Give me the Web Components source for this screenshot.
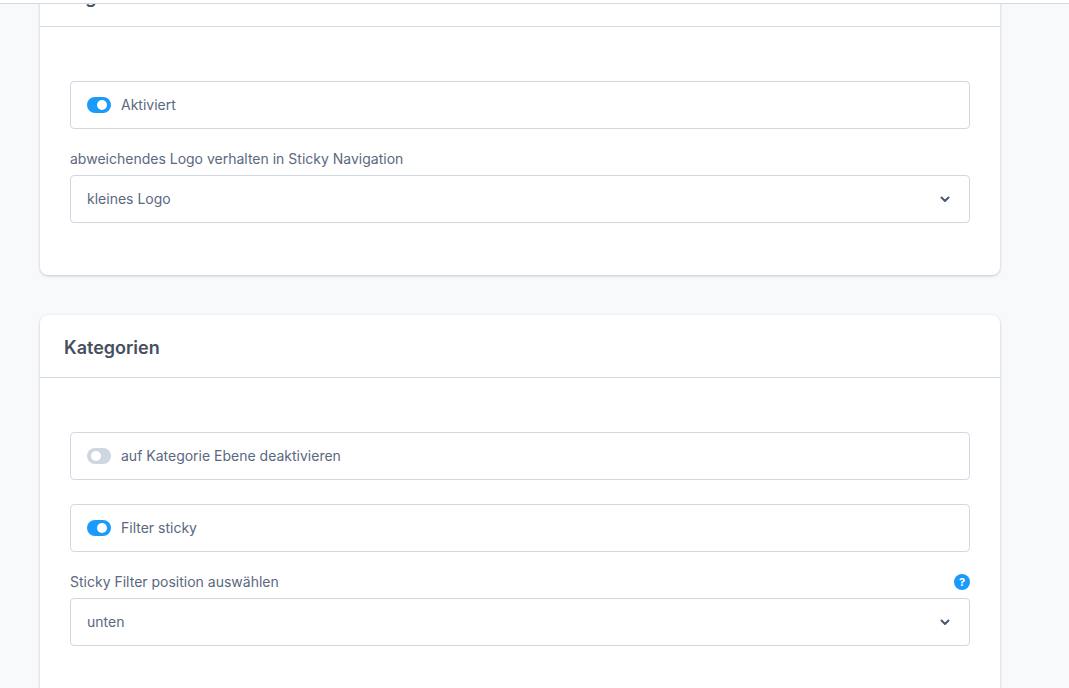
<!DOCTYPE html>
<html lang="de"><head><meta charset="utf-8"><title>Einstellungen</title>
<style>
html,body{margin:0;height:688px;overflow:hidden;background:#f8f9fb;font-family:Inter,"Liberation Sans",sans-serif;font-size:14px;color:#5a6880}
</style></head><body>
<app-topbar></app-topbar>
<app-page>
  <settings-card title="Logo">
    <toggle-field checked>Aktiviert</toggle-field>
    <select-field label="abweichendes Logo verhalten in Sticky Navigation" value="kleines Logo"></select-field>
  </settings-card>
  <settings-card title="Kategorien" open-end>
    <toggle-field>auf Kategorie Ebene deaktivieren</toggle-field>
    <toggle-field checked>Filter sticky</toggle-field>
    <select-field label="Sticky Filter position auswählen" value="unten" help></select-field>
  </settings-card>
</app-page>
<script>
function def(name, html, init){
  customElements.define(name, class extends HTMLElement{
    connectedCallback(){
      if(this.shadowRoot) return;
      const r=this.attachShadow({mode:'open'});
      r.innerHTML=html;
      if(init) init(this,r);
    }
  });
}
def('app-topbar',`<style>:host{display:block;position:absolute;z-index:2;left:0;top:0;right:0;height:3px;background:#fff;border-bottom:1px solid #d5dae1}</style>`);
def('app-page',`<style>:host{display:flex;flex-direction:column;gap:40px;width:960px;margin:-36px 0 0 40px}</style><slot></slot>`);
def('settings-card',`<style>
:host{display:block;background:#fff;border-radius:8px;box-shadow:0 1px 3px rgba(60,70,90,.28)}
header{box-sizing:border-box;height:63px;padding:2px 24px 0;display:flex;align-items:center;border-bottom:1px solid #d3dbe5;font-size:18px;font-weight:600;color:#454f5e}
.body{display:flex;flex-direction:column;padding:54px 30px 52px}
::slotted(toggle-field){margin-bottom:24px}
::slotted(select-field){margin-top:-6px}
</style><header></header><div class="body"><slot></slot></div>`,(h,r)=>{
  r.querySelector('header').textContent=h.getAttribute('title');
});
def('toggle-field',`<style>
:host{display:flex;align-items:center;gap:10px;box-sizing:border-box;height:48px;padding:0 16px;background:#fff;border:1px solid #cfd8e3;border-radius:4px;color:#5a6880}
.sw{width:24px;height:16px;border-radius:8px;background:#ced6df;display:flex;align-items:center;padding:0 4px;box-sizing:border-box;flex:none}
.sw i{width:10px;height:10px;border-radius:50%;background:#fff;display:block}
:host([checked]) .sw{background:#1a9bfc;justify-content:flex-end}
.txt{padding-bottom:2px}
</style><span class="sw"><i></i></span><span class="txt"><slot></slot></span>`);
def('select-field',`<style>
:host{display:block}
.lab{display:flex;justify-content:space-between;align-items:center;height:24px;margin-bottom:4px;color:#5a6880}
.t,.v{padding-bottom:2px}
.help{width:16px;height:16px;border-radius:50%;background:#1a9bfc;color:#fff;font:700 11px/16px Inter,sans-serif;text-align:center;display:none}
:host([help]) .help{display:block}
.box{display:flex;align-items:center;justify-content:space-between;box-sizing:border-box;height:48px;padding:0 16px;background:#fff;border:1px solid #cfd8e3;border-radius:4px;color:#5a6880}
svg{display:block;width:16px;height:16px}
</style><div class="lab"><span class="t"></span><span class="help">?</span></div>
<div class="box"><span class="v"></span><svg viewBox="0 0 16 16" fill="none" stroke="#4a5a70" stroke-width="2" stroke-linecap="round" stroke-linejoin="round"><path d="M4.5 6.5 8 10l3.5-3.5"/></svg></div>`,(h,r)=>{
  r.querySelector('.t').textContent=h.getAttribute('label');
  r.querySelector('.v').textContent=h.getAttribute('value');
});
</script>
</body></html>
